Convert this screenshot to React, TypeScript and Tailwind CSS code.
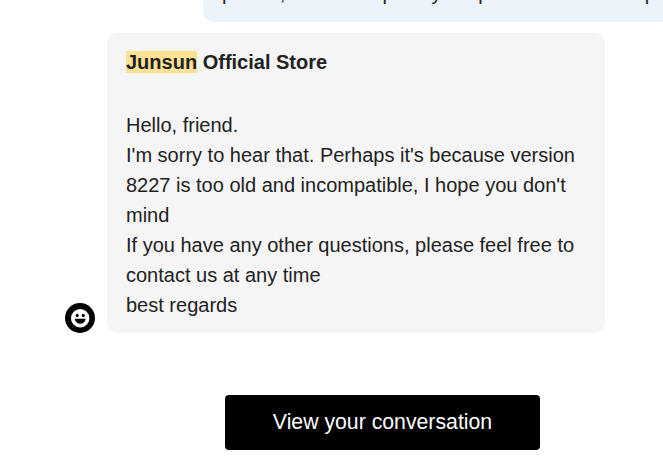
const message = [
  "Hello, friend.",
  "I'm sorry to hear that. Perhaps it's because version 8227 is too old and incompatible, I hope you don't mind",
  "If you have any other questions, please feel free to contact us at any time",
  "best regards",
];

const Avatar = () => (
  <svg className="block w-[30px] h-[30px] shrink-0" viewBox="0 0 30 30">
    <circle cx="15" cy="15" r="15" fill="#000" />
    <circle cx="15.2" cy="15.3" r="9.2" fill="#fff" />
    <ellipse cx="12.2" cy="12.5" rx="1.5" ry="1.8" fill="#000" />
    <ellipse cx="18.3" cy="12.5" rx="1.5" ry="1.8" fill="#000" />
    <path d="M9.7 15.7h11c-.6 3.3-2.8 5.1-5.5 5.1s-4.9-1.8-5.5-5.1z" fill="#000" />
  </svg>
);

const SentBubble = () => (
  <div className="ml-[203px] h-[21.5px] shrink-0 rounded-bl-[10px] bg-[#eaf4fa] pl-[19px] overflow-hidden">
    <p className="-mt-[22px] whitespace-pre text-[20px] leading-[30px] tracking-[-0.2px]">
      please, he tried to put my old phone in the same pit
    </p>
  </div>
);

const ReceivedBubble = () => (
  <div className="flex items-end mt-[11.5px] pl-[65px]">
    <Avatar />
    <div className="ml-3 w-[498px] h-[300px] shrink-0 rounded-[10px] bg-[#f5f5f5] pt-[14px] px-[19px] text-[20px] leading-[30px]">
      <h2 className="font-bold mb-[33px]">
        <mark className="bg-[#fde293] text-inherit">Junsun</mark> Official Store
      </h2>
      {message.map((line) => (
        <p key={line}>{line}</p>
      ))}
    </div>
  </div>
);

export default function App() {
  return (
    <main className="flex flex-col w-full h-[462px] overflow-hidden bg-white text-[#222] font-['Liberation_Sans',Arial,sans-serif]">
      <SentBubble />
      <ReceivedBubble />
      <button
        type="button"
        className="mt-[62px] ml-[225px] w-[315px] h-[55px] shrink-0 rounded-[4px] bg-black text-white text-[21.25px]"
      >
        View your conversation
      </button>
    </main>
  );
}
